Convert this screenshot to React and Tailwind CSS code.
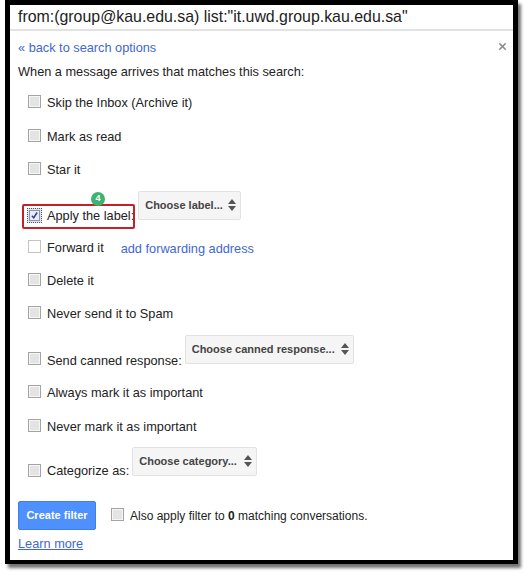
import { X } from "lucide-react";

function Checkbox({ checked, faded }) {
  if (checked) {
    return (
      <span className="flex h-[15px] w-[15px] shrink-0 items-center justify-center border border-dotted border-[#555] bg-[#dfe3ef]">
        <span className="flex h-[11px] w-[11px] items-center justify-center border border-[#8d93b5] bg-[#e9ecf6]">
          <svg viewBox="0 0 12 12" className="h-[11px] w-[11px]">
            <path d="M2.5 6.2 L5 9 L9.5 2" fill="none" stroke="#33408f" strokeWidth="2" />
          </svg>
        </span>
      </span>
    );
  }
  return (
    <span
      className={`mb-[2px] h-[13px] w-[13px] shrink-0 border ${
        faded ? "border-[#c4c4c4] bg-white" : "border-[#a4a4a4] bg-[#e4e4e4] shadow-[inset_0_0_0_1px_#f6f6f6]"
      }`}
    />
  );
}

function Select({ label, className }) {
  return (
    <span
      className={`flex h-[29px] shrink-0 items-center justify-between rounded-[2px] border border-[#e2e2e2] bg-[#f5f5f5] pl-[6px] pr-[4px] text-[11px] font-bold text-[#444] ${className}`}
    >
      {label}
      <svg viewBox="0 0 8 12" className="h-[12px] w-[8px]">
        <path d="M4 0 L8 5 H0 Z M0 7 H8 L4 12 Z" fill="#555" />
      </svg>
    </span>
  );
}

function Row({ className, children }) {
  return <div className={`flex h-5 items-center pl-[18px] ${className}`}>{children}</div>;
}

export default function App() {
  return (
    <div className="h-[580px] w-[530px] bg-white font-['Liberation_Sans',Arial,sans-serif] text-[12.75px] text-[#222]">
      <div className="relative ml-[5px] h-[564px] w-[513px] border-x-[5px] border-t-[5px] border-b-[4px] border-black bg-white shadow-[3px_4px_3px_rgba(0,0,0,0.55)]">
        <div className="flex h-[26px] items-center border-b-2 border-[#e2e2e2] pl-[8px] text-[15.9px] text-[#222]">
          from:(group@kau.edu.sa) list:"it.uwd.group.kau.edu.sa"
        </div>
        <X className="absolute right-[5px] top-[36px] h-[11px] w-[11px] text-[#8c8c8c]" strokeWidth={3.5} />
        <div className="pl-[8px] pt-[9px] leading-[16px] text-[#3f68cf]">« back to search options</div>
        <div className="pl-[8px] pt-[8px] leading-[16px]">When a message arrives that matches this search:</div>

        <Row className="mt-[12px]">
          <Checkbox />
          <span className="ml-[6px] mt-[2px]">Skip the Inbox (Archive it)</span>
        </Row>
        <Row className="mt-[14px]">
          <Checkbox />
          <span className="ml-[6px] mt-[2px]">Mark as read</span>
        </Row>
        <Row className="mt-[13px]">
          <Checkbox />
          <span className="ml-[6px] mt-[2px]">Star it</span>
        </Row>
        <Row className="relative mt-[26px]">
          <span className="-ml-px mr-[-1px]">
            <Checkbox checked />
          </span>
          <span className="ml-[6px] mt-[2px]">Apply the label:</span>
          <Select label="Choose label..." className="mb-[20px] ml-[4px] w-[103px]" />
          <span className="absolute left-[12px] top-[-1px] h-[25px] w-[113px] rounded-[2px] border-2 border-[#c4202a]" />
          <span className="absolute left-[81px] top-[-13px] flex h-[14px] w-[14px] items-center justify-center rounded-full bg-[#3cb371] text-[9px] font-bold text-white">
            4
          </span>
        </Row>
        <Row className="mt-[12px]">
          <Checkbox faded />
          <span className="ml-[6px] mt-[2px]">Forward it</span>
          <span className="ml-[17px] mt-[4px] text-[#3f68cf]">add forwarding address</span>
        </Row>
        <Row className="mt-[13px]">
          <Checkbox />
          <span className="ml-[6px] mt-[2px]">Delete it</span>
        </Row>
        <Row className="mt-[13px]">
          <Checkbox />
          <span className="ml-[6px] mt-[2px]">Never send it to Spam</span>
        </Row>
        <Row className="mt-[26px]">
          <Checkbox />
          <span className="ml-[6px] mt-[3px]">Send canned response:</span>
          <Select label="Choose canned response..." className="mb-[20px] ml-[3px] w-[169px]" />
        </Row>
        <Row className="mt-[13px]">
          <Checkbox />
          <span className="ml-[6px] mt-[2px]">Always mark it as important</span>
        </Row>
        <Row className="mt-[14px]">
          <Checkbox />
          <span className="ml-[6px] mt-[2px]">Never mark it as important</span>
        </Row>
        <Row className="mt-[25px]">
          <Checkbox />
          <span className="ml-[6px]">Categorize as:</span>
          <Select label="Choose category..." className="mb-[20px] ml-[3px] w-[125px]" />
        </Row>

        <div className="mt-[20px] flex items-start pl-[8px]">
          <span className="flex h-[29px] w-[78px] items-center justify-center rounded-[2px] border border-[#3f7fe8] bg-[#4d90fe] text-[11px] font-bold text-white">
            Create filter
          </span>
          <span className="ml-[15px] mt-[4px] flex items-center">
            <Checkbox />
            <span className="ml-[6px] mt-[2px] text-[12px]">
              Also apply filter to <b>0</b> matching conversations.
            </span>
          </span>
        </div>
        <div className="pl-[8px] pt-[6px] leading-[16px] text-[#3f68cf] underline">Learn more</div>
      </div>
    </div>
  );
}
